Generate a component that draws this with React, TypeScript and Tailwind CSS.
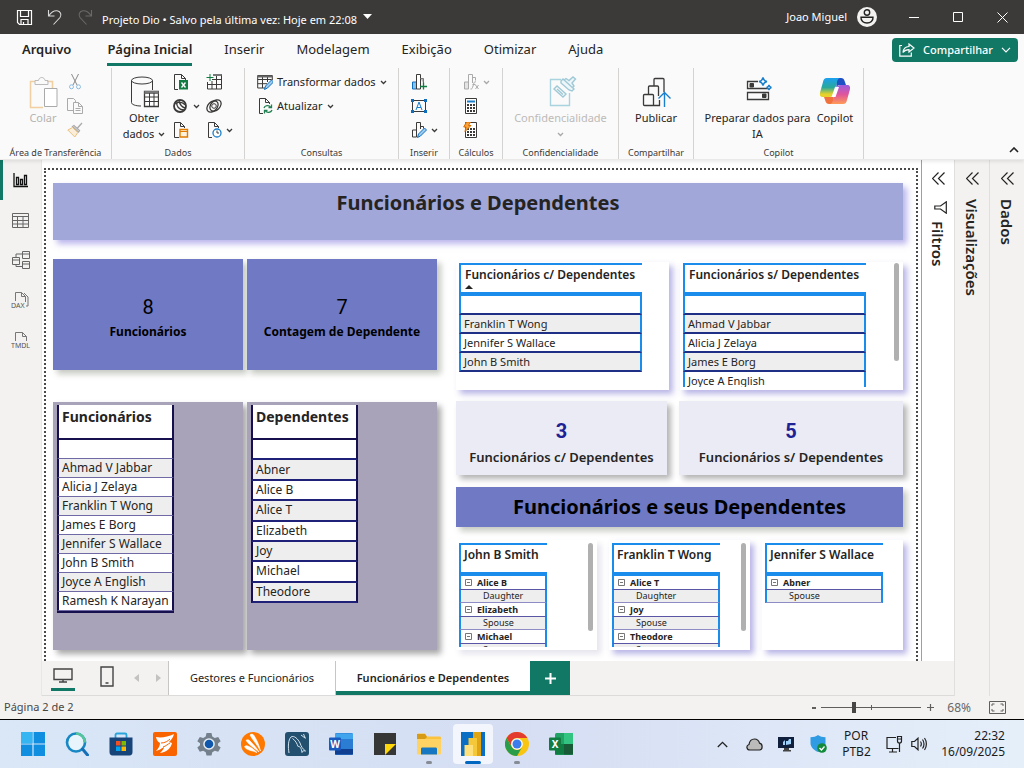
import type { ReactNode } from "react";

const people = [
  "Ahmad V Jabbar",
  "Alicia J Zelaya",
  "Franklin T Wong",
  "James E Borg",
  "Jennifer S Wallace",
  "John B Smith",
  "Joyce A English",
  "Ramesh K Narayan",
];

const dependents = ["Abner", "Alice B", "Alice T", "Elizabeth", "Joy", "Michael", "Theodore"];

type Relation = { name: string; kind: string };

type IconProps = { size?: number; w?: number; children: ReactNode };

function Icon({ size = 16, w, children }: IconProps) {
  return (
    <svg
      width={w ?? size}
      height={size}
      viewBox={`0 0 ${w ?? size} ${size}`}
      fill="none"
      stroke="#3b3a39"
      strokeWidth="1"
      className="shrink-0"
      aria-hidden="true"
    >
      {children}
    </svg>
  );
}

function Chevron({ faded = false }: { faded?: boolean }) {
  return (
    <svg width="7" height="5" viewBox="0 0 7 5" fill="none" stroke={faded ? "#a8a8a8" : "#3b3a39"} strokeWidth="1.3" className="shrink-0">
      <path d="M1 1l2.5 2.5L6 1" />
    </svg>
  );
}

function TitleBar() {
  return (
    <header className="flex h-[34px] items-center bg-[#3b3a39] text-[11px] text-white">
      <button aria-label="Salvar" className="ml-4">
        <svg width="17" height="17" viewBox="0 0 17 17" fill="none" stroke="#fff" strokeWidth="1.2">
          <path d="M1.5 1.5h14v14h-12l-2-2zM4.500 1.500v6h8v-6M5 15.500v-5h7v5M7.500 13v2.500" />
        </svg>
      </button>
      <button aria-label="Desfazer" className="ml-[14px]">
        <svg width="16" height="16" viewBox="0 0 16 16" fill="none" stroke="#d8d8d8" strokeWidth="1.1">
          <path d="M1.500 1v6h6M1.800 6.800C4 3.500 7 1.500 10 1.800c3.500.4 5 4 3 6.700L6.500 15.500" />
        </svg>
      </button>
      <button aria-label="Refazer" className="ml-[14px]">
        <svg width="16" height="16" viewBox="0 0 16 16" fill="none" stroke="#6a6968" strokeWidth="1.1">
          <path d="M14.500 1v6h-6M14.200 6.800C12 3.500 9 1.500 6 1.800c-3.500.4-5 4-3 6.700l6.500 7" />
        </svg>
      </button>
      <button className="ml-[9px] flex items-center gap-[6px] pt-[6px]">
        <span>Projeto Dio • Salvo pela última vez: Hoje em 22:08</span>
        <svg width="9" height="5" viewBox="0 0 9 5" className="mb-2" fill="#fff">
          <path d="M0 0h9L4.500 5z" />
        </svg>
      </button>
      <div className="ml-auto flex items-center">
        <span>Joao Miguel</span>
        <svg width="20" height="20" viewBox="0 0 20 20" className="ml-[10px]">
          <circle cx="10" cy="10" r="10" fill="#f3f2f1" />
          <circle cx="10" cy="5.500" r="2.700" fill="none" stroke="#222" strokeWidth="1.400" />
          <path d="M4 10.200h12c.3 3.500-2.500 5.800-6 5.800s-6.300-2.300-6-5.800z" fill="none" stroke="#222" strokeWidth="1.400" />
        </svg>
        <button aria-label="Minimizar" className="ml-[15px] flex w-11 justify-center">
          <svg width="10" height="10" viewBox="0 0 10 10" stroke="#fff">
            <path d="M0 5.500h10" />
          </svg>
        </button>
        <button aria-label="Maximizar" className="flex w-11 justify-center">
          <svg width="10" height="10" viewBox="0 0 10 10" stroke="#fff" fill="none">
            <path d="M.5.5h9v9h-9z" />
          </svg>
        </button>
        <button aria-label="Fechar" className="flex w-11 justify-center">
          <svg width="11" height="11" viewBox="0 0 11 11" stroke="#fff">
            <path d="M.5.5l10 10M10.500.5l-10 10" />
          </svg>
        </button>
      </div>
    </header>
  );
}

function MenuTabs() {
  return (
    <nav className="flex h-8 items-center gap-8 pr-[6px] pl-[22px] text-[13px] text-[#252423]">
      <button className="mr-1 font-semibold">Arquivo</button>
      <button className="h-8 border-b-[3px] border-[#117865] pt-[3px] font-semibold">Página Inicial</button>
      <button>Inserir</button>
      <button>Modelagem</button>
      <button>Exibição</button>
      <button>Otimizar</button>
      <button>Ajuda</button>
      <button className="ml-auto flex h-6 items-center gap-2 rounded bg-[#117865] px-[7px] text-[11px] font-medium text-white">
        <svg width="16" height="14" viewBox="0 0 16 14" fill="none" stroke="#fff" strokeWidth="1.200">
          <path d="M3 2.500H.8v10.700h11.500V9.500M10 1l5 4-5 4V6.600c-3 0-4.700.9-6 2.900.3-3.500 2.300-5.800 6-6z" />
        </svg>
        Compartilhar
        <svg width="10" height="6" viewBox="0 0 10 6" fill="none" stroke="#fff" strokeWidth="1.200">
          <path d="M1 .8l4 4 4-4" />
        </svg>
      </button>
    </nav>
  );
}

function Group({ label, width, children }: { label: string; width: string; children: ReactNode }) {
  return (
    <section className={`flex h-[91px] shrink-0 flex-col border-r border-[#d5d3d1] pt-[2px] ${width}`}>
      <div className="flex flex-1">{children}</div>
      <h2 className="text-center text-[9px] leading-3 whitespace-nowrap text-[#3b3a39]">{label}</h2>
    </section>
  );
}

function Bars() {
  return (
    <>
      <path d="M1.500 8h4v7h-4z" fill="#83c3f0" stroke="#106ebe" />
      <path d="M5.500 15V.5h4V15z" fill="#fff" />
      <path d="M9.500 4.500h3v5" fill="#b5b5b5" stroke="#777" />
    </>
  );
}

function Calculator() {
  return (
    <>
      <path d="M2.500.5h11v15h-11z" fill="#fff" />
      <path
        d="M4 6h2v2H4zM7 6h2v2H7zM10 6h2v2h-2zM4 9h2v2H4zM7 9h2v2H7zM10 9h2v2h-2zM4 12h2v2H4zM7 12h2v2H7zM10 12h2v2h-2z"
        fill="#3b3a39"
        stroke="none"
      />
    </>
  );
}

function Ribbon() {
  const small = "flex h-6 items-center gap-1";
  const big = "flex flex-col items-center pt-[6px] text-[11px] leading-4";
  return (
    <div className="flex h-[93px] items-start pt-[2px] text-[#252423]">
      <Group label="Área de Transferência" width="w-[112px]">
        <button className={`${big} ml-[27px] text-[#b5b3b1]`}>
          <Icon size={34} w={32}>
            <path d="M8 5.500H3.500v26H16M20 5.500h5.500V12" stroke="#f2cfa0" strokeWidth="1.500" />
            <path d="M8 8.500v-4h3.500c.5-4 6-4 6.500 0H21v4z" stroke="#bbb" />
            <path d="M17.500 12.500H30v18H17.500z" fill="#fff" stroke="#aaa" />
          </Icon>
          <span>Colar</span>
        </button>
        <div className="ml-2 flex flex-col">
          <button aria-label="Recortar" className={small}>
            <Icon>
              <path d="M4.500 0L10 11M11.500 0L6 11" stroke="#888" />
              <circle cx="4.500" cy="12.800" r="2" stroke="#8bbce0" />
              <circle cx="11.500" cy="12.800" r="2" stroke="#8bbce0" />
            </Icon>
          </button>
          <button aria-label="Copiar" className={small}>
            <Icon>
              <path d="M6 12.500H.5V.5h6l2 2V4M6.500 4.500h5l4 4v7h-9zM11.500 4.500v4h4M8.500 10.500h5M8.500 12.500h5" stroke="#aaa" />
            </Icon>
          </button>
          <button aria-label="Pincel" className={small}>
            <Icon>
              <path d="M15 1l-4.500 5M5.500 4.500l6 5.500 1-1.500-5.500-5z" stroke="#aaa" strokeWidth="1.300" />
              <path d="M5.500 5.500L.8 8l7 7 3-4.500z" fill="#faeed8" stroke="#eac083" />
            </Icon>
          </button>
        </div>
      </Group>

      <Group label="Dados" width="w-[133px]">
        <button className={`${big} ml-2 w-[48px]`}>
          <Icon size={32} w={30}>
            <ellipse cx="13" cy="4.500" rx="10.500" ry="3.500" />
            <path d="M2.500 4.500v22c0 2 4 3.500 9.500 3.500M23.500 4.500V14" />
            <path d="M15.500 15.500h14v15h-14z" fill="#fff" strokeWidth="1.300" />
            <path d="M15.500 16.500h14" strokeWidth="3" stroke="#777" />
            <path d="M15.500 21h14M15.500 25.500h14M20.500 17v13.500M25 17v13.500" />
          </Icon>
          <span className="mt-[2px]">Obter</span>
          <span className="flex items-center gap-1 whitespace-nowrap">dados <Chevron /></span>
        </button>
        <div className="ml-[5px] flex w-[33px] flex-col">
          <button aria-label="Excel" className={small}>
            <Icon>
              <path d="M5 15.500H1.500V.5h7l4 4V6M8.500.5v4h4" />
              <path d="M6 6h9v9.500H6z" fill="#107c41" stroke="none" />
              <path d="M8.500 8.500l4 5M12.500 8.500l-4 5" stroke="#fff" strokeWidth="1.300" />
            </Icon>
          </button>
          <button aria-label="OneLake" className={small}>
            <Icon>
              <circle cx="7" cy="8" r="6" strokeWidth="1.800" />
              <path d="M2.500 6c2.500-2.500 6-2.500 10 1M4 4c-1 4 2 8 7 8M6 3c1 4 3.500 6.500 6.500 7" strokeWidth="1.300" />
            </Icon>
            <Chevron />
          </button>
          <button aria-label="SQL Server" className={small}>
            <Icon>
              <path d="M6 15.500H1.500V.5h6l4 4V6M7.500.5v4h4" />
              <path d="M7 7.500h7.500v7.500H7z" fill="#fff3e0" stroke="#e07b00" strokeWidth="1.400" />
              <path d="M7 9.500h7.500" stroke="#e07b00" />
            </Icon>
          </button>
        </div>
        <div className="flex flex-col">
          <button aria-label="Inserir dados" className={small}>
            <Icon>
              <path d="M7 .5h8.500v14.500h-14V8M1.500 10.500h14M6 5.500h9.500M6 7v8M10.500.5V15" />
              <path d="M7 1h8.500" stroke="#777" strokeWidth="2" />
              <path d="M4 0v7M.5 3.500h7" stroke="#107c41" />
            </Icon>
          </button>
          <button aria-label="Dataverse" className={small}>
            <Icon>
              <ellipse cx="6.500" cy="8.500" rx="6.500" ry="4.500" strokeWidth="1.300" transform="rotate(-45 6.500 8.500)" />
              <ellipse cx="9.500" cy="7.500" rx="6.500" ry="4.500" strokeWidth="1.300" transform="rotate(-45 9.500 7.500)" />
              <circle cx="8" cy="8" r="2.300" />
            </Icon>
          </button>
          <button aria-label="Fontes recentes" className={small}>
            <Icon>
              <path d="M6 15.500H2.500V.5h6l4 4V6M8.500.5v4h4" />
              <circle cx="11" cy="11" r="4" fill="#fff" stroke="#1b7fcc" strokeWidth="1.300" />
              <path d="M11 8.500V11h2" />
            </Icon>
            <Chevron />
          </button>
        </div>
      </Group>

      <Group label="Consultas" width="w-[154px]">
        <div className="ml-3 flex flex-col text-[11px]">
          <button className={small}>
            <Icon>
              <path d="M8 14H.7V1.500h14.600V6M.7 5.500h14M.7 9.700H10M5.500 2v12M10.500 2v6" />
              <path d="M.7 2.500h14.600" stroke="#666" strokeWidth="2" />
              <path d="M7.500 15.500l1-3.500 6-6 2 2-6 6z" fill="#9ccdf0" stroke="#106ebe" />
            </Icon>
            Transformar dados <Chevron />
          </button>
          <button className={small}>
            <Icon>
              <path d="M6 15.500H2.500V.5h6l4 4V6M8.500.5v4h4" />
              <path d="M7 10c.7-2.700 5-3.300 6.500-1M14.500 6.500v3h-3M15 12c-1 2.700-5 3.300-6.500 1M7.500 15.500v-3h3" stroke="#218051" strokeWidth="1.300" />
            </Icon>
            Atualizar <Chevron />
          </button>
        </div>
      </Group>

      <Group label="Inserir" width="w-[51px]">
        <div className="ml-3 flex flex-col">
          <button aria-label="Novo visual" className={small}>
            <Icon>
              <Bars />
              <path d="M12.500 8.500v7M9 12.500h7" stroke="#107c41" strokeWidth="1.300" />
            </Icon>
          </button>
          <button aria-label="Caixa de texto" className={small}>
            <Icon>
              <path d="M1.500 2.500h13v11h-13z" />
              <path d="M0 1h3v3H0zM13 1h3v3h-3zM0 12h3v3H0zM13 12h3v3h-3z" fill="#106ebe" stroke="none" />
              <path d="M5 12l3-8 3 8M6 9.500h4" stroke="#1b7fcc" />
            </Icon>
          </button>
          <button aria-label="Mais visuais" className={small}>
            <Icon>
              <path d="M1.500 8h4v7h-4zM5.500 13V.5h4V7M9.500 4.500h3v2" />
              <path d="M6.500 15.500l1-3.500 6-6 2 2-6 6z" fill="#9ccdf0" stroke="#106ebe" />
            </Icon>
            <Chevron />
          </button>
        </div>
      </Group>

      <Group label="Cálculos" width="w-[53px]">
        <div className="ml-[13px] flex flex-col">
          <button aria-label="Nova medida visual" className={small}>
            <Icon>
              <path d="M1.500 8h4v7h-4z" fill="#e4e4e4" stroke="#aaa" />
              <path d="M5.500 15V.5h4V9M9.500 3.500h3v3" stroke="#aaa" />
              <path d="M13 8c-2-1-2 1-3 4s-1 3-2.500 3M9.500 10.500h3M12.500 11l3 4M15.500 11l-3 4" stroke="#aaa" />
            </Icon>
            <Chevron faded />
          </button>
          <button aria-label="Nova medida" className={small}>
            <Icon>
              <Calculator />
              <path d="M4 3.500h8" stroke="#1b7fcc" strokeWidth="2" />
            </Icon>
          </button>
          <button aria-label="Medida rápida" className={small}>
            <Icon>
              <Calculator />
              <path d="M3.500 0h4L5.500 3.500H8L2 9.500 3 5H.7z" fill="#f7a13a" stroke="#d86c00" />
            </Icon>
          </button>
        </div>
      </Group>

      <Group label="Confidencialidade" width="w-[116px]">
        <button className={`${big} w-full text-[#bdbbb9]`}>
          <Icon size={32} w={32}>
            <path d="M16 3.500H5.500v26h19V17" stroke="#a9d3df" strokeWidth="1.400" />
            <path d="M9 13l3-3 9 8-3 3zM12 13l6 5.500" stroke="#9fc9d6" strokeWidth="1.400" />
            <path d="M16 5l2-2 11 10-2 2-3-1-8-7zM19 4l2-1.500 3 2L28 1l2.500 2-3.500 4 2 3-1.500 2" fill="#eef6f9" stroke="#9fc9d6" strokeWidth="1.400" />
          </Icon>
          <span className="mt-[2px]">Confidencialidade</span>
          <span className="mt-[6px]"><Chevron faded /></span>
        </button>
      </Group>

      <Group label="Compartilhar" width="w-[75px]">
        <button className={`${big} w-full`}>
          <Icon size={32} w={32}>
            <path d="M13.500 29.500h-9c-.6 0-1-.4-1-1v-9c0-.6.400-1 1-1h8c.6 0 1 .4 1 1zM8.500 18v-7c0-.6.400-1 1-1h8c.6 0 1 .4 1 1v9M13.500 29.500h6V24M14 10V3.500c0-.6.400-1 1-1h8c.6 0 1 .4 1 1V16" strokeWidth="1.300" />
            <path d="M24.500 31V17M18.500 22.500l6-6 6 6" stroke="#1b7fcc" strokeWidth="1.400" />
          </Icon>
          <span className="mt-[2px]">Publicar</span>
        </button>
      </Group>

      <Group label="Copilot" width="w-[170px]">
        <button className={`${big} ml-[6px] w-[115px]`}>
          <Icon size={32} w={32}>
            <path d="M16 5.500H5.500v7h21M5.500 16.500h21v7h-21z" strokeWidth="1.300" />
            <path d="M8 7.500h3.500V11H8zM20.500 18H24v3.500h-3.500z" fill="#3b3a39" />
            <path d="M21 1.500c.5 2.500 1.500 3.500 4 4-2.500.5-3.500 1.500-4 4-.5-2.500-1.500-3.500-4-4 2.500-.5 3.500-1.500 4-4zM27 9c.3 1.500 1 2.200 2.500 2.500-1.500.3-2.200 1-2.500 2.500-.3-1.500-1-2.200-2.500-2.500 1.500-.3 2.200-1 2.500-2.500z" stroke="#1b7fcc" strokeWidth="1.300" fill="#fff" />
          </Icon>
          <span className="mt-[2px]">Preparar dados para IA</span>
        </button>
        <button className={`${big} w-[40px]`}>
          <svg width="32" height="32" viewBox="0 0 32 32">
            <defs>
              <linearGradient id="cpA" x1="0" y1="0" x2="0" y2="1">
                <stop offset="0" stopColor="#1aa0f0" />
                <stop offset=".5" stopColor="#2aa89a" />
                <stop offset=".85" stopColor="#e6d22a" />
              </linearGradient>
              <linearGradient id="cpB" x1="0" y1="0" x2="0" y2="1">
                <stop offset="0" stopColor="#9a5be0" />
                <stop offset=".5" stopColor="#e0559c" />
                <stop offset="1" stopColor="#ff9a55" />
              </linearGradient>
            </defs>
            <path d="M17 2h5c2 0 3 1 3.600 3l1.400 4h-6c-2 0-3 1-3.500 3z" fill="#1f4fc4" />
            <path d="M15 28h-5c-2 0-3-1-3.600-3L5 21h6c2 0 3-1 3.500-3z" fill="#f0713c" />
            <path d="M8 2h13c-2 .5-2.500 2-3 4l-3 11c-.7 2.500-2 4-5 4H4c-3 0-3.500-2-2.800-5L4 6c.6-2.500 1.500-4 4-4z" fill="url(#cpA)" />
            <path d="M24 28H11c2-.5 2.500-2 3-4l3-11c.7-2.500 2-4 5-4h6c3 0 3.500 2 2.800 5L28 24c-.6 2.500-1.500 4-4 4z" fill="url(#cpB)" />
            <path d="M16 11h4l-3.500 10H12.500z" fill="#fff" />
          </svg>
          <span className="mt-[2px]">Copilot</span>
        </button>
      </Group>

      <button aria-label="Recolher faixa" className="mt-auto mr-[5px] mb-[6px] ml-auto">
        <svg width="10" height="6" viewBox="0 0 10 6" fill="none" stroke="#252423" strokeWidth="1.600">
          <path d="M1 5l4-4 4 4" />
        </svg>
      </button>
    </div>
  );
}

function ViewRail() {
  const item = "flex h-10 w-full items-center justify-center";
  return (
    <nav className="flex w-[42px] shrink-0 flex-col border-r border-[#e9e7e6] bg-[#f3f2f1]">
      <button aria-label="Relatório" className={`${item} border-l-[3px] border-[#117865] pr-[3px]`}>
        <svg width="15" height="15" viewBox="0 0 15 15" fill="none" stroke="#111" strokeWidth="1.300">
          <path d="M1 0v13.500h14M3.500 4.500h2v7h-2zM7.500 6.500h2v5h-2zM11.500 2.500h2v9h-2z" />
        </svg>
      </button>
      <button aria-label="Dados" className={item}>
        <Icon size={17}>
          <path d="M.5 1.500h16v14H.5zM.5 4.500h16M.5 8.500h16M.5 12h16M5.500 4.500v11M11 4.500v11" stroke="#666" />
        </Icon>
      </button>
      <button aria-label="Modelo" className={item}>
        <Icon size={18}>
          <path d="M.5 6.500h7v7h-7zM.5 9h7M10.500.5h7v7h-7zM10.500 3h7M10.500 10.500h7v7h-7zM10.500 13h7M4 6.500V3h6.500M4 13.500v2h6.500" stroke="#666" />
        </Icon>
      </button>
      <button aria-label="DAX" className={item}>
        <Icon size={18} w={20}>
          <path d="M4.500 10V1.500h6l4 4V11M10.500 1.500v4h4M13 2l4 4v9h-2" stroke="#777" />
          <text x="0" y="17" fontSize="7" fill="#555" stroke="none">DAX</text>
        </Icon>
      </button>
      <button aria-label="TMDL" className={item}>
        <Icon size={18} w={20}>
          <path d="M4.500 10V1.500h7l4 4V10M11.500 1.500v4h4" stroke="#777" />
          <text x="0" y="17" fontSize="7" fill="#555" stroke="none">TMDL</text>
        </Icon>
      </button>
    </nav>
  );
}

function BlueTable({ title, rows, sorted = false }: { title: string; rows: string[]; sorted?: boolean }) {
  return (
    <table className="w-[183px] border-separate border-spacing-0 text-left text-[11px] leading-4 text-[#252423]">
      <thead>
        <tr>
          <th className="h-[33px] border-t-2 border-b-4 border-l-2 border-[#1a8ceb] p-0 pl-1 align-top text-[12px] leading-5 font-semibold whitespace-nowrap">
            {title}
            {sorted && (
              <svg width="8" height="4" viewBox="0 0 8 4" fill="#252423">
                <path d="M4 0l4 4H0z" />
              </svg>
            )}
          </th>
        </tr>
      </thead>
      <tbody>
        {["", ...rows].map((name) => (
          <tr key={name} className="odd:bg-white even:bg-[#eeeeee]">
            <td className="h-[19px] border-x-2 border-b-2 border-x-[#1a8ceb] border-b-[#1f2f86] p-0 pl-[3px]">{name}</td>
          </tr>
        ))}
      </tbody>
    </table>
  );
}

function RelationTable({ title, rows, width }: { title: string; rows: Relation[]; width: string }) {
  return (
    <table className={`border-separate border-spacing-0 self-start text-left text-[9px] leading-3 text-[#252423] ${width}`}>
      <thead>
        <tr>
          <th className="h-[33px] border-t-2 border-b-4 border-l-2 border-[#1a8ceb] p-0 pl-[3px] align-top text-[12px] leading-5 font-semibold whitespace-nowrap">
            {title}
          </th>
        </tr>
      </thead>
      {rows.map((row) => (
        <tbody key={row.name}>
          <tr>
            <td className="h-[14px] border-x-2 border-b border-x-[#1a8ceb] border-b-[#5b55a5] p-0 pl-1 font-bold">
              <span className="flex items-center gap-[5px]">
                <svg width="7" height="7" viewBox="0 0 7 7" fill="none" stroke="#777">
                  <path d="M.5.5h6v6h-6zM2 3.500h3" />
                </svg>
                {row.name}
              </span>
            </td>
          </tr>
          <tr>
            <td className="h-[13px] border-x-2 border-b border-x-[#1a8ceb] border-b-[#8f8bc4] bg-[#eeeeee] p-0 pl-[22px]">{row.kind}</td>
          </tr>
        </tbody>
      ))}
    </table>
  );
}

type RelationPanelProps = { title: string; rows: Relation[]; width: string; scroll?: boolean; shadow: string };

function RelationPanel({ title, rows, width, scroll = false, shadow }: RelationPanelProps) {
  return (
    <div className={`h-[110px] flex-1 bg-white pt-[3px] pr-1 pb-[3px] pl-[3px] ${shadow}`}>
      <div className="flex h-full justify-between overflow-hidden">
        <RelationTable title={title} rows={rows} width={width} />
        {scroll && <div className="h-[88px] w-[5px] rounded-full bg-[#b0b0b0]" />}
      </div>
    </div>
  );
}

function CountCard({ value, label }: { value: string; label: string }) {
  return (
    <div className="flex h-[111px] flex-1 flex-col items-center bg-[#6f79c4] pt-9 text-black shadow-[4px_4px_6px_rgba(110,120,100,0.4)]">
      <p className="font-[Roboto] text-[20px] leading-6">{value}</p>
      <p className="text-[12px] leading-[26px] font-bold">{label}</p>
    </div>
  );
}

function LightCard({ value, label }: { value: string; label: string }) {
  return (
    <div className="flex h-[74px] flex-col items-center bg-[#eaebf5] pt-[18px] shadow-[4px_4px_6px_rgba(0,0,0,0.3)]">
      <p className="font-[Roboto] text-[20px] leading-6 font-bold text-[#1d2294]">{value}</p>
      <p className="text-[13px] leading-7 font-semibold text-[#252423]">{label}</p>
    </div>
  );
}

function Report() {
  return (
    <div className="mt-2 mr-[3px] ml-[2px] flex-1 border-2 border-b-0 border-dotted border-[#4a4a4a] pt-[13px] pr-[13px] pb-[10px] pl-[7px]">
      <h1 className="h-[57px] bg-[#a1a7d9] pt-1 text-center text-[20px] leading-8 font-bold text-[#252423] shadow-[4px_4px_6px_rgba(120,110,220,0.5)]">
        Funcionários e Dependentes
      </h1>

      <div className="mt-[19px] flex gap-[19px]">
        <div className="flex flex-1 flex-col gap-8">
          <div className="flex gap-1">
            <CountCard value="8" label="Funcionários" />
            <CountCard value="7" label="Contagem de Dependente" />
          </div>
          <div className="flex gap-1">
            <div className="h-[248px] flex-1 bg-[#a8a3b8] pt-[3px] pl-1 shadow-[4px_4px_6px_rgba(0,0,0,0.35)]">
              <table className="w-[117px] border-separate border-spacing-0 text-left text-[12px] leading-4 text-[#252423]">
                <thead>
                  <tr>
                    <th className="h-[35px] border-x-2 border-b-2 border-[#17104f] bg-white p-0 pl-[3px] align-top text-[14px] leading-6 font-bold">Funcionários</th>
                  </tr>
                </thead>
                <tbody>
                  {["", ...people].map((name) => (
                    <tr key={name} className="odd:bg-white even:bg-[#eeeeee]">
                      <td className="h-[19px] border-x-2 border-b border-x-[#17104f] border-b-[#6f6aa6] p-0 pl-[3px] whitespace-nowrap">{name}</td>
                    </tr>
                  ))}
                </tbody>
                <tfoot>
                  <tr>
                    <td className="h-[2px] bg-[#17104f] p-0" />
                  </tr>
                </tfoot>
              </table>
            </div>
            <div className="h-[248px] flex-1 bg-[#a8a3b8] pt-[3px] pl-1 shadow-[4px_4px_6px_rgba(0,0,0,0.35)]">
              <table className="h-[198px] w-[107px] border-separate border-spacing-0 text-left text-[12px] leading-4 text-[#252423]">
                <thead>
                  <tr>
                    <th className="h-[35px] border-x-2 border-b-2 border-[#17104f] bg-white p-0 pl-[3px] align-top text-[14px] leading-6 font-bold">Dependentes</th>
                  </tr>
                </thead>
                <tbody>
                  {["\u00a0", ...dependents].map((name) => (
                    <tr key={name} className="odd:bg-white even:bg-[#eeeeee]">
                      <td className="border-x-2 border-b-2 border-x-[#17104f] border-b-[#1f2078] p-0 pl-[3px]">{name}</td>
                    </tr>
                  ))}
                </tbody>
              </table>
            </div>
          </div>
        </div>

        <div className="w-[447px] pt-[3px]">
          <div className="flex gap-[11px]">
            <div className="h-[128px] w-[213px] bg-white pt-px pl-[3px] shadow-[4px_4px_6px_rgba(100,90,200,0.45)]">
              <BlueTable title="Funcionários c/ Dependentes" rows={["Franklin T Wong", "Jennifer S Wallace", "John B Smith"]} sorted />
            </div>
            <div className="h-[128px] flex-1 bg-white pt-px pr-1 pb-[3px] pl-[3px] shadow-[4px_4px_6px_rgba(100,90,200,0.45)]">
              <div className="flex h-full items-start justify-between overflow-hidden">
                <BlueTable title="Funcionários s/ Dependentes" rows={["Ahmad V Jabbar", "Alicia J Zelaya", "James E Borg", "Joyce A English"]} />
                <div className="h-[98px] w-[5px] rounded-full bg-[#b0b0b0]" />
              </div>
            </div>
          </div>

          <div className="mt-[11px] grid grid-cols-[211px_1fr] gap-3">
            <LightCard value="3" label="Funcionários c/ Dependentes" />
            <LightCard value="5" label="Funcionários s/ Dependentes" />
          </div>

          <h2 className="mt-3 h-10 bg-[#6f79c4] text-center text-[20px] leading-10 font-bold text-black shadow-[4px_4px_6px_rgba(110,120,100,0.4)]">
            Funcionários e seus Dependentes
          </h2>

          <div className="mt-[13px] flex gap-3">
            <RelationPanel
              title="John B Smith"
              width="w-[88px]"
              scroll
              shadow="shadow-[4px_4px_6px_rgba(120,120,160,0.2)]"
              rows={[
                { name: "Alice B", kind: "Daughter" },
                { name: "Elizabeth", kind: "Spouse" },
                { name: "Michael", kind: "Son" },
              ]}
            />
            <RelationPanel
              title="Franklin T Wong"
              width="w-[108px]"
              scroll
              shadow="shadow-[4px_4px_6px_rgba(100,90,200,0.45)]"
              rows={[
                { name: "Alice T", kind: "Daughter" },
                { name: "Joy", kind: "Spouse" },
                { name: "Theodore", kind: "Son" },
              ]}
            />
            <RelationPanel
              title="Jennifer S Wallace"
              width="w-[118px]"
              shadow="shadow-[4px_4px_6px_rgba(100,90,200,0.45)]"
              rows={[{ name: "Abner", kind: "Spouse" }]}
            />
          </div>
        </div>
      </div>
    </div>
  );
}

function PageTabs() {
  return (
    <div className="flex h-[35px] shrink-0 items-stretch border-b border-[#dddbd9] bg-[#f3f2f1] text-[11px] text-[#252423]">
      <button aria-label="Layout da área de trabalho" className="mb-1 ml-[9px] flex w-6 flex-col items-center justify-between border-b-[3px] border-[#117865] pt-[7px]">
        <svg width="20" height="15" viewBox="0 0 20 15" fill="none" stroke="#444" strokeWidth="1.400">
          <path d="M1 1h18v10.500H1zM10 11.500v2.500M6 14h8" />
        </svg>
      </button>
      <button aria-label="Layout móvel" className="ml-[25px] pb-[3px]">
        <svg width="14" height="21" viewBox="0 0 14 21" fill="none" stroke="#444" strokeWidth="1.400">
          <path d="M1 1h12v19H1zM5.500 17h3" />
        </svg>
      </button>
      <div className="ml-5 flex w-[27px] items-center justify-between text-[#c4c2c0]">
        <button aria-label="Anterior">
          <svg width="6" height="8" viewBox="0 0 6 8" fill="currentColor"><path d="M5 0v8L0 4z" /></svg>
        </button>
        <button aria-label="Próxima">
          <svg width="6" height="8" viewBox="0 0 6 8" fill="currentColor"><path d="M1 0v8l5-4z" /></svg>
        </button>
      </div>
      <button className="ml-[7px] w-[168px] border-x border-[#c8c6c4] bg-white">Gestores e Funcionários</button>
      <button className="w-[194px] border-b-4 border-[#117865] bg-white pt-1 font-semibold">Funcionários e Dependentes</button>
      <button aria-label="Nova página" className="flex w-10 items-center justify-center bg-[#117865]">
        <svg width="11" height="11" viewBox="0 0 11 11" stroke="#fff" strokeWidth="2">
          <path d="M5.500 0v11M0 5.500h11" />
        </svg>
      </button>
    </div>
  );
}

function Pane({ title, className, filter = false }: { title: string; className: string; filter?: boolean }) {
  return (
    <button className={`flex shrink-0 flex-col items-center pt-3 ${className}`}>
      <svg width="13" height="13" viewBox="0 0 13 13" fill="none" stroke="#252423" strokeWidth="1.200">
        <path d="M6.500.5l-6 6 6 6M12.500.5l-6 6 6 6" />
      </svg>
      {filter && (
        <svg width="13" height="13" viewBox="0 0 13 13" fill="none" stroke="#252423" strokeWidth="1.200" className="mt-4 ml-1">
          <path d="M12.300.8v11.400L6.500 8H.8V5h5.700z" />
        </svg>
      )}
      <span className={`text-[15px] leading-5 font-semibold text-[#252423] [writing-mode:vertical-rl] ${filter ? "mt-[7px]" : "mt-[14px]"}`}>{title}</span>
    </button>
  );
}

function StatusBar() {
  return (
    <footer className="flex h-6 items-center border-b border-black bg-[#f3f2f1] pr-[18px] pl-1 text-[11px] text-[#484644]">
      <span>Página 2 de 2</span>
      <div className="ml-auto flex items-center">
        <button aria-label="Diminuir zoom" className="h-[2px] w-1 bg-[#605e5c]" />
        <div className="relative mx-[5px] flex items-center">
          <span className="absolute left-1/2 h-[5px] w-px bg-[#605e5c]" />
          <input
            type="range"
            aria-label="Zoom"
            min="0"
            max="100"
            defaultValue="32"
            className="h-px w-[100px] appearance-none bg-[#605e5c] [&::-webkit-slider-thumb]:h-[11px] [&::-webkit-slider-thumb]:w-1 [&::-webkit-slider-thumb]:appearance-none [&::-webkit-slider-thumb]:bg-[#484644]"
          />
        </div>
        <button aria-label="Aumentar zoom">
          <svg width="9" height="9" viewBox="0 0 9 9" stroke="#605e5c" strokeWidth="1.200">
            <path d="M4.500 1v7M1 4.500h7" />
          </svg>
        </button>
        <span className="ml-3 text-[12px] text-[#6b6967]">68%</span>
        <button aria-label="Ajustar à página" className="ml-[18px]">
          <svg width="17" height="13" viewBox="0 0 17 13" fill="none" stroke="#605e5c">
            <path d="M.5.5h16v12H.5zM3 5V3h2.500M11.500 3H14v2M3 8v2h2.500M11.500 10H14V8" />
          </svg>
        </button>
      </div>
    </footer>
  );
}

type TaskButtonProps = { label: string; active?: boolean; running?: boolean; children: ReactNode };

function TaskButton({ label, active = false, running = false, children }: TaskButtonProps) {
  return (
    <button aria-label={label} className="flex h-12 w-11 flex-col items-center justify-center">
      <span className={`flex h-10 w-10 flex-col items-center justify-between rounded pt-2 ${active ? "bg-white/70" : ""}`}>
        <svg width="24" height="24" viewBox="0 0 24 24" fill="none">
          {children}
        </svg>
        {active && <span className="h-[3px] w-4 rounded-full bg-[#0067c0]" />}
        {running && <span className="h-[3px] w-[6px] rounded-full bg-[#868b94]" />}
      </span>
    </button>
  );
}

function Taskbar() {
  return (
    <div className="flex h-12 items-center bg-linear-to-r from-[#d9e7f7] via-[#d5def3] to-[#e5effa] pr-[19px] pl-[11px] text-[12px] leading-4 text-[#1b1b1b]">
      <TaskButton label="Iniciar">
        <path d="M0 0h11.400v11.400H0zM12.600 0H24v11.400H12.600zM0 12.600h11.400V24H0zM12.600 12.600H24V24H12.600z" fill="#108fe0" />
        <path d="M0 0h11.400v11.400H0z" fill="#35b5f2" />
      </TaskButton>
      <TaskButton label="Pesquisar">
        <circle cx="11" cy="10.500" r="9" fill="#e8f4fb" stroke="#1788c4" strokeWidth="2.600" />
        <path d="M11 1.500a9 9 0 019 9" stroke="#55c59b" strokeWidth="2.600" />
        <path d="M17.500 17l5 6" stroke="#1670b8" strokeWidth="3" strokeLinecap="round" />
      </TaskButton>
      <TaskButton label="Microsoft Store">
        <path d="M6.500 6V3c0-1 .5-1.500 1.500-1.500h8c1 0 1.500.5 1.500 1.500v3" stroke="#2aa5dc" strokeWidth="1.800" />
        <path d="M.5 5.500h23V20c0 2-1 3.500-3 3.500h-17c-2 0-3-1.500-3-3.500z" fill="#17457a" />
        <path d="M7 9h4.500v4.500H7z" fill="#f25022" />
        <path d="M12.500 9H17v4.500h-4.500z" fill="#7fba00" />
        <path d="M7 14.500h4.500V19H7z" fill="#00a4ef" />
        <path d="M12.500 14.500H17V19h-4.500z" fill="#ffb900" />
      </TaskButton>
      <TaskButton label="Foxit">
        <rect width="24" height="24" rx="2" fill="#fa6400" />
        <path d="M3 5c5 1 12 0 18-3-1 4-3 6-5 8l3 1c-1 5-5 9-12 10 2-2 4-4 4-6-3 2-5 3-8 4 3-3 4-6 4-8-2-1-3.500-3-4-6z" fill="#fff" />
        <path d="M8 11c4 0 7-2 9-4M10 15c3-1 5-3 7-4" stroke="#fa6400" />
      </TaskButton>
      <TaskButton label="Configurações">
        <path d="M9.500 1h5l.8 3.500 2.500 1.400 3.400-1 2.500 4.300L21 11.500v2l2.700 2-2.500 4.300-3.400-1-2.500 1.400-.8 3.300h-5l-.8-3.300-2.500-1.400-3.400 1L.3 15.500 3 13.300v-2L.3 9.200l2.500-4.300 3.400 1 2.500-1.400z" fill="#74808c" />
        <circle cx="12" cy="12" r="5.800" fill="#e7edf3" />
        <circle cx="12" cy="12" r="4.300" fill="#0e57ad" />
      </TaskButton>
      <TaskButton label="Avast">
        <circle cx="12" cy="12" r="12" fill="#ff7800" />
        <path d="M9 3c1-1.500 3-1 4 .5 2.500 4 5 9 6.500 15.500C16 12 11.500 8 9 3zM5 8.500c.8-1.200 2.500-1 3.500 0 3.500 3.500 7 7 9.500 11.500-4.500-4-10-7-13-11.500zM3.500 15c.6-1.500 2-1.500 3.200-1 3.800 1.500 6.300 3.500 9.300 6.500-4.500-2-10-2-12.500-5.500z" fill="#fff" stroke="#fff" strokeWidth=".6" />
      </TaskButton>
      <TaskButton label="MySQL Workbench">
        <rect width="24" height="24" rx="3" fill="#24506f" />
        <path d="M4 21c-1-6-1-13 2-16 3-2 7 2 9 6 1 3 2.500 6 5.500 8-2-.5-3.500 0-3.500 1.500-.5-4-2-6.500-4-6-1-3-2.500-6-5.500-8" stroke="#d4e3ee" />
        <path d="M16 3l4 3M18.500 2l2 4.500" stroke="#d4e3ee" />
      </TaskButton>
      <TaskButton label="Word">
        <rect x="6" y="1" width="18" height="22" rx="1.500" fill="#2b7cd3" />
        <path d="M6 1.500h18V7H6z" fill="#41a5ee" />
        <path d="M6 17h18v5.500H6z" fill="#103f91" />
        <rect y="5.500" width="12" height="13" rx="1" fill="#185abd" />
        <text x="6" y="16" fontSize="10" fontWeight="700" textAnchor="middle" fill="#fff">W</text>
      </TaskButton>
      <TaskButton label="Notas">
        <path d="M1 1h22v22H1z" fill="#363636" />
        <path d="M12 12h11L12 23z" fill="#ffd60a" />
      </TaskButton>
      <TaskButton label="Explorador de Arquivos" running>
        <path d="M0 3c0-1 .6-1.500 1.500-1.500H8l2 3h12.500c1 0 1.500.6 1.500 1.500v15H0z" fill="#fbc23c" />
        <path d="M0 2h8l2 3-2 2H0z" fill="#d79a15" />
        <path d="M0 7h24v14c0 1-.6 1.500-1.500 1.500h-21C.6 22.500 0 22 0 21z" fill="#ffd363" />
        <path d="M4 22.500V17c0-1 .6-1.500 1.500-1.500h13c1 0 1.500.6 1.500 1.500v5.500z" fill="#1678c2" />
      </TaskButton>
      <TaskButton label="Power BI" active>
        <path d="M0 0h24v24H0z" fill="#0a6fc4" />
        <path d="M12 0h8v24h-8z" fill="#e0a414" />
        <path d="M7.500 6H16v18H7.500z" fill="#f5c83a" />
        <path d="M3.500 13H12v11H3.500z" fill="#ffe07a" />
      </TaskButton>
      <TaskButton label="Chrome" running>
        <circle cx="12" cy="12" r="12" fill="#f9c513" />
        <path d="M1.600 6A12 12 0 0122.400 6H12a6 6 0 00-5.200 9z" fill="#e33b2e" />
        <path d="M1.600 6l5.200 9a6 6 0 0010.400 0L12 24A12 12 0 011.600 6z" fill="#2a9d4a" />
        <circle cx="12" cy="12" r="5.800" fill="#fff" />
        <circle cx="12" cy="12" r="4.500" fill="#3b7ded" />
      </TaskButton>
      <TaskButton label="Excel">
        <rect x="6" y="1" width="18" height="22" rx="1.500" fill="#21a366" />
        <path d="M15 1h9v11h-9z" fill="#33c481" />
        <path d="M6 12h18v10.500H6z" fill="#107c41" />
        <path d="M15 12h9v10.500h-9z" fill="#185c37" />
        <rect y="5.500" width="12" height="13" rx="1" fill="#107c41" />
        <text x="6" y="16" fontSize="10" fontWeight="700" textAnchor="middle" fill="#fff">X</text>
      </TaskButton>

      <div className="ml-auto flex items-center">
        <button aria-label="Ícones ocultos" className="flex w-8 justify-center">
          <svg width="11" height="7" viewBox="0 0 11 7" fill="none" stroke="#222" strokeWidth="1.300"><path d="M.8 6l4.700-4.700L10.200 6" /></svg>
        </button>
        <button aria-label="OneDrive" className="flex w-8 justify-center">
          <svg width="17" height="13" viewBox="0 0 17 13" fill="#bbb" stroke="#222" strokeWidth="1.200">
            <path d="M4 12C.5 12-.3 7.500 3 6.500 3.500 3 6 1 8.500 1s4.300 1.500 5 4.200C17 5.800 17 12 13.500 12z" />
          </svg>
        </button>
        <button aria-label="Monitor" className="flex w-8 justify-center">
          <svg width="16" height="16" viewBox="0 0 16 16">
            <path d="M0 1h16v11H0z" fill="#10203c" />
            <path d="M3 9h2V6l2-2v5zM8 9V5h2l1-2h2v5z" fill="#9fd0f7" />
            <path d="M6 12h5v2h2v1.500H5V14h1z" fill="#444" />
          </svg>
        </button>
        <button aria-label="Segurança" className="flex w-8 justify-center">
          <svg width="17" height="18" viewBox="0 0 17 18">
            <path d="M8 0c2 1.500 4.500 2.200 7.500 2.200V8c0 4-3 7-7.500 9C3.500 15 .5 12 .5 8V2.200C3.500 2.200 6 1.500 8 0z" fill="#2f9be3" />
            <circle cx="12" cy="13" r="4.800" fill="#13893a" />
            <path d="M9.500 13l2 2 3-3.500" stroke="#fff" strokeWidth="1.300" fill="none" />
          </svg>
        </button>
        <button className="ml-2 w-[28px] text-center">POR PTB2</button>
        <button aria-label="Rede e volume" className="ml-4 flex items-center gap-2">
          <svg width="17" height="18" viewBox="0 0 17 18" fill="none" stroke="#222" strokeWidth="1.200">
            <path d="M10 2.500H1v11h11.500M6.500 13.500V17M3 17h8M13.500 8v9M11.500 1.500h4v4.500c0 1-.8 2-2 2s-2-1-2-2zM11.500 4h4" />
          </svg>
          <svg width="16" height="14" viewBox="0 0 16 14" fill="none" stroke="#222" strokeWidth="1.200">
            <path d="M.8 4.500h2.700L7 1.200v11.600L3.500 9.500H.8zM9.500 4.500c1 1.500 1 3.500 0 5M11.500 2.500c2 2.500 2 6.500 0 9M13.500 1c2.500 3.500 2.500 8.500 0 12" />
          </svg>
        </button>
        <button className="ml-[14px] text-right">
          22:32
          <br />
          16/09/2025
        </button>
      </div>
    </div>
  );
}

export default function App() {
  return (
    <div className="flex min-h-screen flex-col bg-white font-['Noto_Sans',sans-serif]">
      <TitleBar />
      <div className="relative border-b border-[#ebe9e8] bg-[#fafafa] shadow-[0_2px_3px_rgba(0,0,0,0.08)]">
        <MenuTabs />
        <Ribbon />
      </div>
      <main className="flex flex-1 bg-[#f3f2f1]">
        <ViewRail />
        <div className="flex flex-1 flex-col">
          <div className="flex flex-1 bg-white">
            <Report />
            <Pane title="Filtros" filter className="w-[33px] border-l border-[#a19f9d] bg-white" />
          </div>
          <PageTabs />
        </div>
        <Pane title="Visualizações" className="w-[35px] border-l border-[#e1dfdd]" />
        <Pane title="Dados" className="w-[35px] border-l border-[#e1dfdd]" />
      </main>
      <StatusBar />
      <Taskbar />
    </div>
  );
}
